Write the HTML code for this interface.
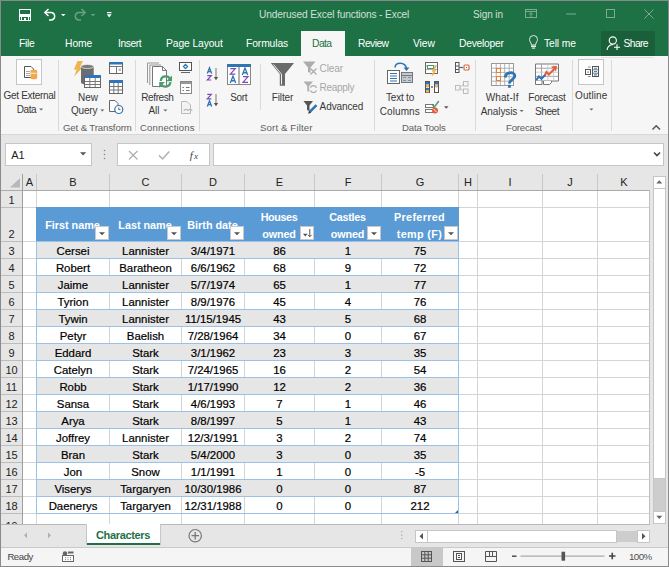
<!DOCTYPE html>
<html><head><meta charset="utf-8"><style>
html,body{margin:0;padding:0;}
body{width:669px;height:567px;position:relative;overflow:hidden;font-family:"Liberation Sans",sans-serif;}
.t{position:absolute;white-space:nowrap;}
.r{position:absolute;}
</style></head><body>
<div class="r" style="left:0px;top:0px;width:669px;height:567px;background:#8a8a8a;"></div>
<div class="r" style="left:1px;top:1px;width:667px;height:55px;background:#1e7145;"></div>
<div class="t" style="left:259px;top:8.61px;font-size:10.2px;line-height:11.72px;color:#cfe0d6;letter-spacing:-0.15px;">Underused Excel functions - Excel</div>
<div class="t" style="left:473px;top:8.79px;font-size:10px;line-height:11.49px;color:#cfe0d6;letter-spacing:-0.1px;">Sign in</div>
<div class="t" style="left:19px;top:37.51px;font-size:10.3px;line-height:11.83px;color:#ffffff;letter-spacing:-0.3px;">File</div>
<div class="t" style="left:65px;top:37.51px;font-size:10.3px;line-height:11.83px;color:#ffffff;letter-spacing:-0.05px;">Home</div>
<div class="t" style="left:118px;top:37.51px;font-size:10.3px;line-height:11.83px;color:#ffffff;letter-spacing:-0.45px;">Insert</div>
<div class="t" style="left:166px;top:37.51px;font-size:10.3px;line-height:11.83px;color:#ffffff;letter-spacing:-0.1px;">Page Layout</div>
<div class="t" style="left:246px;top:37.51px;font-size:10.3px;line-height:11.83px;color:#ffffff;letter-spacing:-0.1px;">Formulas</div>
<div class="t" style="left:358px;top:37.51px;font-size:10.3px;line-height:11.83px;color:#ffffff;letter-spacing:-0.55px;">Review</div>
<div class="t" style="left:413px;top:37.51px;font-size:10.3px;line-height:11.83px;color:#ffffff;letter-spacing:-0.1px;">View</div>
<div class="t" style="left:459px;top:37.51px;font-size:10.3px;line-height:11.83px;color:#ffffff;letter-spacing:-0.25px;">Developer</div>
<div class="t" style="left:544px;top:37.51px;font-size:10.3px;line-height:11.83px;color:#ffffff;letter-spacing:-0.1px;">Tell me</div>
<div class="r" style="left:301px;top:31px;width:44px;height:25px;background:#f6f6f6;"></div>
<div class="t" style="left:312px;top:37.51px;font-size:10.3px;line-height:11.83px;color:#1e7145;letter-spacing:-0.55px;">Data</div>
<div class="r" style="left:601px;top:31px;width:54px;height:25px;background:#195f39;"></div>
<div class="t" style="left:623.5px;top:37.51px;font-size:10.3px;line-height:11.83px;color:#ffffff;letter-spacing:-0.6px;">Share</div>
<div class="r" style="left:1px;top:56px;width:667px;height:78px;background:#f6f6f6;"></div>
<div class="r" style="left:1px;top:134px;width:667px;height:1px;background:#d8d8d8;"></div>
<div class="r" style="left:601px;top:57px;width:53px;height:1px;background:#e0e0e0;"></div>
<div class="r" style="left:58px;top:60px;width:1px;height:71px;background:#dadada;"></div>
<div class="r" style="left:135px;top:60px;width:1px;height:71px;background:#dadada;"></div>
<div class="r" style="left:199px;top:60px;width:1px;height:71px;background:#dadada;"></div>
<div class="r" style="left:374px;top:60px;width:1px;height:71px;background:#dadada;"></div>
<div class="r" style="left:475px;top:60px;width:1px;height:71px;background:#dadada;"></div>
<div class="r" style="left:572px;top:60px;width:1px;height:71px;background:#dadada;"></div>
<div class="r" style="left:611px;top:60px;width:1px;height:71px;background:#dadada;"></div>
<div class="r" style="left:260px;top:64px;width:1px;height:46px;background:#dadada;"></div>
<div class="t" style="left:63px;top:121.66px;font-size:9.6px;line-height:11.03px;color:#5e5e5e;letter-spacing:-0.12px;">Get &amp; Transform</div>
<div class="t" style="left:140px;top:121.66px;font-size:9.6px;line-height:11.03px;color:#5e5e5e;letter-spacing:0.12px;">Connections</div>
<div class="t" style="left:260px;top:121.66px;font-size:9.6px;line-height:11.03px;color:#5e5e5e;letter-spacing:0.15px;">Sort &amp; Filter</div>
<div class="t" style="left:402px;top:121.66px;font-size:9.6px;line-height:11.03px;color:#5e5e5e;letter-spacing:-0.15px;">Data Tools</div>
<div class="t" style="left:506px;top:121.66px;font-size:9.6px;line-height:11.03px;color:#5e5e5e;letter-spacing:-0.2px;">Forecast</div>
<div class="t" style="left:3.5px;top:89.79px;font-size:10px;line-height:11.49px;color:#383838;letter-spacing:-0.3px;">Get External</div>
<div class="t" style="left:16.8px;top:103.79px;font-size:10px;line-height:11.49px;color:#383838;letter-spacing:-0.45px;">Data</div>
<div class="t" style="left:78px;top:91.59px;font-size:10px;line-height:11.49px;color:#383838;">New</div>
<div class="t" style="left:71px;top:105.39px;font-size:10px;line-height:11.49px;color:#383838;letter-spacing:-0.2px;">Query</div>
<div class="t" style="left:141.3px;top:91.59px;font-size:10px;line-height:11.49px;color:#383838;letter-spacing:-0.4px;">Refresh</div>
<div class="t" style="left:148.4px;top:105.39px;font-size:10px;line-height:11.49px;color:#383838;">All</div>
<div class="t" style="left:230.3px;top:91.59px;font-size:10px;line-height:11.49px;color:#383838;letter-spacing:-0.35px;">Sort</div>
<div class="t" style="left:271.7px;top:91.59px;font-size:10px;line-height:11.49px;color:#383838;letter-spacing:-0.1px;">Filter</div>
<div class="t" style="left:319.6px;top:62.59px;font-size:10px;line-height:11.49px;color:#a6a6a6;letter-spacing:-0.1px;">Clear</div>
<div class="t" style="left:319.6px;top:82.29px;font-size:10px;line-height:11.49px;color:#a6a6a6;letter-spacing:-0.3px;">Reapply</div>
<div class="t" style="left:319.6px;top:101.49px;font-size:10px;line-height:11.49px;color:#383838;letter-spacing:-0.1px;">Advanced</div>
<div class="t" style="left:386px;top:91.59px;font-size:10px;line-height:11.49px;color:#383838;letter-spacing:-0.2px;">Text to</div>
<div class="t" style="left:379.7px;top:105.59px;font-size:10px;line-height:11.49px;color:#383838;letter-spacing:0.1px;">Columns</div>
<div class="t" style="left:485.7px;top:91.59px;font-size:10px;line-height:11.49px;color:#383838;letter-spacing:0.1px;">What-If</div>
<div class="t" style="left:480.8px;top:105.59px;font-size:10px;line-height:11.49px;color:#383838;letter-spacing:-0.1px;">Analysis</div>
<div class="t" style="left:528.3px;top:91.59px;font-size:10px;line-height:11.49px;color:#383838;letter-spacing:-0.2px;">Forecast</div>
<div class="t" style="left:535px;top:105.59px;font-size:10px;line-height:11.49px;color:#383838;letter-spacing:-0.4px;">Sheet</div>
<div class="t" style="left:575px;top:89.79px;font-size:10px;line-height:11.49px;color:#383838;letter-spacing:0.1px;">Outline</div>
<div class="r" style="left:16px;top:59px;width:26px;height:26px;background:#fdfdfd;box-shadow:inset 0 0 0 1px #c6c6c6;"></div>
<div class="r" style="left:578px;top:59px;width:26px;height:26px;background:#fdfdfd;box-shadow:inset 0 0 0 1px #c6c6c6;"></div>
<div class="r" style="left:1px;top:135px;width:667px;height:39px;background:#e6e6e6;"></div>
<div class="r" style="left:5px;top:143px;width:87px;height:23px;background:#ffffff;box-shadow:inset 0 0 0 1px #c6c6c6;"></div>
<div class="t" style="left:11.2px;top:148.57px;font-size:11px;line-height:12.64px;color:#222;">A1</div>
<div class="r" style="left:117px;top:143px;width:93px;height:23px;background:#ffffff;box-shadow:inset 0 0 0 1px #c6c6c6;"></div>
<div class="r" style="left:213px;top:143px;width:451px;height:23px;background:#ffffff;box-shadow:inset 0 0 0 1px #c6c6c6;"></div>
<div class="r" style="left:1px;top:174px;width:649px;height:17px;background:#e6e6e6;"></div>
<div class="r" style="left:1px;top:191px;width:21px;height:333px;background:#e6e6e6;"></div>
<div class="r" style="left:23px;top:191px;width:626px;height:333px;background:#ffffff;"></div>
<div class="t" style="left:23px;top:175.67px;font-size:11px;line-height:12.64px;color:#222;width:13px;text-align:center;">A</div>
<div class="t" style="left:37px;top:175.67px;font-size:11px;line-height:12.64px;color:#222;width:72px;text-align:center;">B</div>
<div class="t" style="left:110px;top:175.67px;font-size:11px;line-height:12.64px;color:#222;width:71px;text-align:center;">C</div>
<div class="t" style="left:182px;top:175.67px;font-size:11px;line-height:12.64px;color:#222;width:62px;text-align:center;">D</div>
<div class="t" style="left:245px;top:175.67px;font-size:11px;line-height:12.64px;color:#222;width:69px;text-align:center;">E</div>
<div class="t" style="left:315px;top:175.67px;font-size:11px;line-height:12.64px;color:#222;width:66px;text-align:center;">F</div>
<div class="t" style="left:382px;top:175.67px;font-size:11px;line-height:12.64px;color:#222;width:76px;text-align:center;">G</div>
<div class="t" style="left:459px;top:175.67px;font-size:11px;line-height:12.64px;color:#222;width:18px;text-align:center;">H</div>
<div class="t" style="left:478px;top:175.67px;font-size:11px;line-height:12.64px;color:#222;width:64px;text-align:center;">I</div>
<div class="t" style="left:543px;top:175.67px;font-size:11px;line-height:12.64px;color:#222;width:54px;text-align:center;">J</div>
<div class="t" style="left:598px;top:175.67px;font-size:11px;line-height:12.64px;color:#222;width:52px;text-align:center;">K</div>
<div class="r" style="left:36px;top:174px;width:1px;height:16px;background:#c8c8c8;"></div>
<div class="r" style="left:109px;top:174px;width:1px;height:16px;background:#c8c8c8;"></div>
<div class="r" style="left:181px;top:174px;width:1px;height:16px;background:#c8c8c8;"></div>
<div class="r" style="left:244px;top:174px;width:1px;height:16px;background:#c8c8c8;"></div>
<div class="r" style="left:314px;top:174px;width:1px;height:16px;background:#c8c8c8;"></div>
<div class="r" style="left:381px;top:174px;width:1px;height:16px;background:#c8c8c8;"></div>
<div class="r" style="left:458px;top:174px;width:1px;height:16px;background:#c8c8c8;"></div>
<div class="r" style="left:477px;top:174px;width:1px;height:16px;background:#c8c8c8;"></div>
<div class="r" style="left:542px;top:174px;width:1px;height:16px;background:#c8c8c8;"></div>
<div class="r" style="left:597px;top:174px;width:1px;height:16px;background:#c8c8c8;"></div>
<div class="r" style="left:1px;top:190px;width:649px;height:1px;background:#ababab;"></div>
<div class="r" style="left:22px;top:174px;width:1px;height:350px;background:#9e9e9e;"></div>
<div class="r" style="left:23px;top:207px;width:626px;height:1px;background:#d4d4d4;"></div>
<div class="r" style="left:1px;top:207px;width:21px;height:1px;background:#bdbdbd;"></div>
<div class="t" style="left:1px;top:193.97px;font-size:11px;line-height:12.64px;color:#222;width:21px;text-align:center;">1</div>
<div class="r" style="left:23px;top:241px;width:626px;height:1px;background:#d4d4d4;"></div>
<div class="r" style="left:1px;top:241px;width:21px;height:1px;background:#bdbdbd;"></div>
<div class="t" style="left:1px;top:227.97px;font-size:11px;line-height:12.64px;color:#222;width:21px;text-align:center;">2</div>
<div class="r" style="left:23px;top:258px;width:626px;height:1px;background:#d4d4d4;"></div>
<div class="r" style="left:1px;top:258px;width:21px;height:1px;background:#bdbdbd;"></div>
<div class="t" style="left:1px;top:244.97px;font-size:11px;line-height:12.64px;color:#222;width:21px;text-align:center;">3</div>
<div class="r" style="left:23px;top:275px;width:626px;height:1px;background:#d4d4d4;"></div>
<div class="r" style="left:1px;top:275px;width:21px;height:1px;background:#bdbdbd;"></div>
<div class="t" style="left:1px;top:261.97px;font-size:11px;line-height:12.64px;color:#222;width:21px;text-align:center;">4</div>
<div class="r" style="left:23px;top:292px;width:626px;height:1px;background:#d4d4d4;"></div>
<div class="r" style="left:1px;top:292px;width:21px;height:1px;background:#bdbdbd;"></div>
<div class="t" style="left:1px;top:278.97px;font-size:11px;line-height:12.64px;color:#222;width:21px;text-align:center;">5</div>
<div class="r" style="left:23px;top:309px;width:626px;height:1px;background:#d4d4d4;"></div>
<div class="r" style="left:1px;top:309px;width:21px;height:1px;background:#bdbdbd;"></div>
<div class="t" style="left:1px;top:295.97px;font-size:11px;line-height:12.64px;color:#222;width:21px;text-align:center;">6</div>
<div class="r" style="left:23px;top:326px;width:626px;height:1px;background:#d4d4d4;"></div>
<div class="r" style="left:1px;top:326px;width:21px;height:1px;background:#bdbdbd;"></div>
<div class="t" style="left:1px;top:312.97px;font-size:11px;line-height:12.64px;color:#222;width:21px;text-align:center;">7</div>
<div class="r" style="left:23px;top:343px;width:626px;height:1px;background:#d4d4d4;"></div>
<div class="r" style="left:1px;top:343px;width:21px;height:1px;background:#bdbdbd;"></div>
<div class="t" style="left:1px;top:329.97px;font-size:11px;line-height:12.64px;color:#222;width:21px;text-align:center;">8</div>
<div class="r" style="left:23px;top:360px;width:626px;height:1px;background:#d4d4d4;"></div>
<div class="r" style="left:1px;top:360px;width:21px;height:1px;background:#bdbdbd;"></div>
<div class="t" style="left:1px;top:346.97px;font-size:11px;line-height:12.64px;color:#222;width:21px;text-align:center;">9</div>
<div class="r" style="left:23px;top:377px;width:626px;height:1px;background:#d4d4d4;"></div>
<div class="r" style="left:1px;top:377px;width:21px;height:1px;background:#bdbdbd;"></div>
<div class="t" style="left:1px;top:363.97px;font-size:11px;line-height:12.64px;color:#222;width:21px;text-align:center;">10</div>
<div class="r" style="left:23px;top:394px;width:626px;height:1px;background:#d4d4d4;"></div>
<div class="r" style="left:1px;top:394px;width:21px;height:1px;background:#bdbdbd;"></div>
<div class="t" style="left:1px;top:380.97px;font-size:11px;line-height:12.64px;color:#222;width:21px;text-align:center;">11</div>
<div class="r" style="left:23px;top:411px;width:626px;height:1px;background:#d4d4d4;"></div>
<div class="r" style="left:1px;top:411px;width:21px;height:1px;background:#bdbdbd;"></div>
<div class="t" style="left:1px;top:397.97px;font-size:11px;line-height:12.64px;color:#222;width:21px;text-align:center;">12</div>
<div class="r" style="left:23px;top:428px;width:626px;height:1px;background:#d4d4d4;"></div>
<div class="r" style="left:1px;top:428px;width:21px;height:1px;background:#bdbdbd;"></div>
<div class="t" style="left:1px;top:414.97px;font-size:11px;line-height:12.64px;color:#222;width:21px;text-align:center;">13</div>
<div class="r" style="left:23px;top:445px;width:626px;height:1px;background:#d4d4d4;"></div>
<div class="r" style="left:1px;top:445px;width:21px;height:1px;background:#bdbdbd;"></div>
<div class="t" style="left:1px;top:431.97px;font-size:11px;line-height:12.64px;color:#222;width:21px;text-align:center;">14</div>
<div class="r" style="left:23px;top:462px;width:626px;height:1px;background:#d4d4d4;"></div>
<div class="r" style="left:1px;top:462px;width:21px;height:1px;background:#bdbdbd;"></div>
<div class="t" style="left:1px;top:448.97px;font-size:11px;line-height:12.64px;color:#222;width:21px;text-align:center;">15</div>
<div class="r" style="left:23px;top:479px;width:626px;height:1px;background:#d4d4d4;"></div>
<div class="r" style="left:1px;top:479px;width:21px;height:1px;background:#bdbdbd;"></div>
<div class="t" style="left:1px;top:465.97px;font-size:11px;line-height:12.64px;color:#222;width:21px;text-align:center;">16</div>
<div class="r" style="left:23px;top:496px;width:626px;height:1px;background:#d4d4d4;"></div>
<div class="r" style="left:1px;top:496px;width:21px;height:1px;background:#bdbdbd;"></div>
<div class="t" style="left:1px;top:482.97px;font-size:11px;line-height:12.64px;color:#222;width:21px;text-align:center;">17</div>
<div class="r" style="left:23px;top:513px;width:626px;height:1px;background:#d4d4d4;"></div>
<div class="r" style="left:1px;top:513px;width:21px;height:1px;background:#bdbdbd;"></div>
<div class="t" style="left:1px;top:499.97px;font-size:11px;line-height:12.64px;color:#222;width:21px;text-align:center;">18</div>
<div class="t" style="left:1px;top:519.97px;font-size:11px;line-height:12.64px;color:#222;width:21px;text-align:center;">19</div>
<div class="r" style="left:36px;top:191px;width:1px;height:333px;background:#d4d4d4;"></div>
<div class="r" style="left:109px;top:191px;width:1px;height:333px;background:#d4d4d4;"></div>
<div class="r" style="left:181px;top:191px;width:1px;height:333px;background:#d4d4d4;"></div>
<div class="r" style="left:244px;top:191px;width:1px;height:333px;background:#d4d4d4;"></div>
<div class="r" style="left:314px;top:191px;width:1px;height:333px;background:#d4d4d4;"></div>
<div class="r" style="left:381px;top:191px;width:1px;height:333px;background:#d4d4d4;"></div>
<div class="r" style="left:458px;top:191px;width:1px;height:333px;background:#d4d4d4;"></div>
<div class="r" style="left:477px;top:191px;width:1px;height:333px;background:#d4d4d4;"></div>
<div class="r" style="left:542px;top:191px;width:1px;height:333px;background:#d4d4d4;"></div>
<div class="r" style="left:597px;top:191px;width:1px;height:333px;background:#d4d4d4;"></div>
<div class="r" style="left:649px;top:190px;width:1px;height:334px;background:#c0c0c0;"></div>
<div class="r" style="left:36px;top:207px;width:423px;height:34px;background:#5b9bd5;"></div>
<div class="t" style="left:36px;top:219.25px;font-size:10.8px;line-height:12.41px;color:#ffffff;font-weight:bold;width:73px;text-align:center;">First name</div>
<div class="t" style="left:109px;top:219.25px;font-size:10.8px;line-height:12.41px;color:#ffffff;font-weight:bold;width:72px;text-align:center;">Last name</div>
<div class="t" style="left:181px;top:219.25px;font-size:10.8px;line-height:12.41px;color:#ffffff;font-weight:bold;width:63px;text-align:center;">Birth date</div>
<div class="t" style="left:244px;top:210.95px;font-size:10.8px;line-height:12.41px;color:#ffffff;font-weight:bold;width:70px;text-align:center;letter-spacing:-0.4px;">Houses</div>
<div class="t" style="left:244px;top:228.05px;font-size:10.8px;line-height:12.41px;color:#ffffff;font-weight:bold;width:70px;text-align:center;letter-spacing:-0.1px;">owned</div>
<div class="t" style="left:314px;top:210.95px;font-size:10.8px;line-height:12.41px;color:#ffffff;font-weight:bold;width:67px;text-align:center;letter-spacing:-0.3px;">Castles</div>
<div class="t" style="left:314px;top:228.05px;font-size:10.8px;line-height:12.41px;color:#ffffff;font-weight:bold;width:67px;text-align:center;letter-spacing:-0.1px;">owned</div>
<div class="t" style="left:381px;top:210.95px;font-size:10.8px;line-height:12.41px;color:#ffffff;font-weight:bold;width:77px;text-align:center;letter-spacing:0.32px;">Preferred</div>
<div class="t" style="left:381px;top:228.05px;font-size:10.8px;line-height:12.41px;color:#ffffff;font-weight:bold;width:77px;text-align:center;letter-spacing:0.34px;">temp (F)</div>
<div class="r" style="left:37px;top:242px;width:421px;height:16px;background:#e6e6e6;"></div>
<div class="r" style="left:36px;top:258px;width:423px;height:1px;background:#9bc2e6;"></div>
<div class="t" style="left:37px;top:245.00px;font-size:11.4px;line-height:13.10px;color:#000;width:72px;text-align:center;-webkit-text-stroke:0.2px #000;">Cersei</div>
<div class="t" style="left:110px;top:245.00px;font-size:11.4px;line-height:13.10px;color:#000;width:71px;text-align:center;-webkit-text-stroke:0.2px #000;">Lannister</div>
<div class="t" style="left:182px;top:245.00px;font-size:11.4px;line-height:13.10px;color:#000;width:62px;text-align:center;-webkit-text-stroke:0.2px #000;">3/4/1971</div>
<div class="t" style="left:245px;top:245.00px;font-size:11.4px;line-height:13.10px;color:#000;width:69px;text-align:center;-webkit-text-stroke:0.2px #000;">86</div>
<div class="t" style="left:315px;top:245.00px;font-size:11.4px;line-height:13.10px;color:#000;width:66px;text-align:center;-webkit-text-stroke:0.2px #000;">1</div>
<div class="t" style="left:382px;top:245.00px;font-size:11.4px;line-height:13.10px;color:#000;width:76px;text-align:center;-webkit-text-stroke:0.2px #000;">75</div>
<div class="r" style="left:36px;top:275px;width:423px;height:1px;background:#9bc2e6;"></div>
<div class="t" style="left:37px;top:262.00px;font-size:11.4px;line-height:13.10px;color:#000;width:72px;text-align:center;-webkit-text-stroke:0.2px #000;">Robert</div>
<div class="t" style="left:110px;top:262.00px;font-size:11.4px;line-height:13.10px;color:#000;width:71px;text-align:center;-webkit-text-stroke:0.2px #000;">Baratheon</div>
<div class="t" style="left:182px;top:262.00px;font-size:11.4px;line-height:13.10px;color:#000;width:62px;text-align:center;-webkit-text-stroke:0.2px #000;">6/6/1962</div>
<div class="t" style="left:245px;top:262.00px;font-size:11.4px;line-height:13.10px;color:#000;width:69px;text-align:center;-webkit-text-stroke:0.2px #000;">68</div>
<div class="t" style="left:315px;top:262.00px;font-size:11.4px;line-height:13.10px;color:#000;width:66px;text-align:center;-webkit-text-stroke:0.2px #000;">9</div>
<div class="t" style="left:382px;top:262.00px;font-size:11.4px;line-height:13.10px;color:#000;width:76px;text-align:center;-webkit-text-stroke:0.2px #000;">72</div>
<div class="r" style="left:37px;top:276px;width:421px;height:16px;background:#e6e6e6;"></div>
<div class="r" style="left:36px;top:292px;width:423px;height:1px;background:#9bc2e6;"></div>
<div class="t" style="left:37px;top:279.00px;font-size:11.4px;line-height:13.10px;color:#000;width:72px;text-align:center;-webkit-text-stroke:0.2px #000;">Jaime</div>
<div class="t" style="left:110px;top:279.00px;font-size:11.4px;line-height:13.10px;color:#000;width:71px;text-align:center;-webkit-text-stroke:0.2px #000;">Lannister</div>
<div class="t" style="left:182px;top:279.00px;font-size:11.4px;line-height:13.10px;color:#000;width:62px;text-align:center;-webkit-text-stroke:0.2px #000;">5/7/1974</div>
<div class="t" style="left:245px;top:279.00px;font-size:11.4px;line-height:13.10px;color:#000;width:69px;text-align:center;-webkit-text-stroke:0.2px #000;">65</div>
<div class="t" style="left:315px;top:279.00px;font-size:11.4px;line-height:13.10px;color:#000;width:66px;text-align:center;-webkit-text-stroke:0.2px #000;">1</div>
<div class="t" style="left:382px;top:279.00px;font-size:11.4px;line-height:13.10px;color:#000;width:76px;text-align:center;-webkit-text-stroke:0.2px #000;">77</div>
<div class="r" style="left:36px;top:309px;width:423px;height:1px;background:#9bc2e6;"></div>
<div class="t" style="left:37px;top:296.00px;font-size:11.4px;line-height:13.10px;color:#000;width:72px;text-align:center;-webkit-text-stroke:0.2px #000;">Tyrion</div>
<div class="t" style="left:110px;top:296.00px;font-size:11.4px;line-height:13.10px;color:#000;width:71px;text-align:center;-webkit-text-stroke:0.2px #000;">Lannister</div>
<div class="t" style="left:182px;top:296.00px;font-size:11.4px;line-height:13.10px;color:#000;width:62px;text-align:center;-webkit-text-stroke:0.2px #000;">8/9/1976</div>
<div class="t" style="left:245px;top:296.00px;font-size:11.4px;line-height:13.10px;color:#000;width:69px;text-align:center;-webkit-text-stroke:0.2px #000;">45</div>
<div class="t" style="left:315px;top:296.00px;font-size:11.4px;line-height:13.10px;color:#000;width:66px;text-align:center;-webkit-text-stroke:0.2px #000;">4</div>
<div class="t" style="left:382px;top:296.00px;font-size:11.4px;line-height:13.10px;color:#000;width:76px;text-align:center;-webkit-text-stroke:0.2px #000;">76</div>
<div class="r" style="left:37px;top:310px;width:421px;height:16px;background:#e6e6e6;"></div>
<div class="r" style="left:36px;top:326px;width:423px;height:1px;background:#9bc2e6;"></div>
<div class="t" style="left:37px;top:313.00px;font-size:11.4px;line-height:13.10px;color:#000;width:72px;text-align:center;-webkit-text-stroke:0.2px #000;">Tywin</div>
<div class="t" style="left:110px;top:313.00px;font-size:11.4px;line-height:13.10px;color:#000;width:71px;text-align:center;-webkit-text-stroke:0.2px #000;">Lannister</div>
<div class="t" style="left:182px;top:313.00px;font-size:11.4px;line-height:13.10px;color:#000;width:62px;text-align:center;-webkit-text-stroke:0.2px #000;">11/15/1945</div>
<div class="t" style="left:245px;top:313.00px;font-size:11.4px;line-height:13.10px;color:#000;width:69px;text-align:center;-webkit-text-stroke:0.2px #000;">43</div>
<div class="t" style="left:315px;top:313.00px;font-size:11.4px;line-height:13.10px;color:#000;width:66px;text-align:center;-webkit-text-stroke:0.2px #000;">5</div>
<div class="t" style="left:382px;top:313.00px;font-size:11.4px;line-height:13.10px;color:#000;width:76px;text-align:center;-webkit-text-stroke:0.2px #000;">68</div>
<div class="r" style="left:36px;top:343px;width:423px;height:1px;background:#9bc2e6;"></div>
<div class="t" style="left:37px;top:330.00px;font-size:11.4px;line-height:13.10px;color:#000;width:72px;text-align:center;-webkit-text-stroke:0.2px #000;">Petyr</div>
<div class="t" style="left:110px;top:330.00px;font-size:11.4px;line-height:13.10px;color:#000;width:71px;text-align:center;-webkit-text-stroke:0.2px #000;">Baelish</div>
<div class="t" style="left:182px;top:330.00px;font-size:11.4px;line-height:13.10px;color:#000;width:62px;text-align:center;-webkit-text-stroke:0.2px #000;">7/28/1964</div>
<div class="t" style="left:245px;top:330.00px;font-size:11.4px;line-height:13.10px;color:#000;width:69px;text-align:center;-webkit-text-stroke:0.2px #000;">34</div>
<div class="t" style="left:315px;top:330.00px;font-size:11.4px;line-height:13.10px;color:#000;width:66px;text-align:center;-webkit-text-stroke:0.2px #000;">0</div>
<div class="t" style="left:382px;top:330.00px;font-size:11.4px;line-height:13.10px;color:#000;width:76px;text-align:center;-webkit-text-stroke:0.2px #000;">67</div>
<div class="r" style="left:37px;top:344px;width:421px;height:16px;background:#e6e6e6;"></div>
<div class="r" style="left:36px;top:360px;width:423px;height:1px;background:#9bc2e6;"></div>
<div class="t" style="left:37px;top:347.00px;font-size:11.4px;line-height:13.10px;color:#000;width:72px;text-align:center;-webkit-text-stroke:0.2px #000;">Eddard</div>
<div class="t" style="left:110px;top:347.00px;font-size:11.4px;line-height:13.10px;color:#000;width:71px;text-align:center;-webkit-text-stroke:0.2px #000;">Stark</div>
<div class="t" style="left:182px;top:347.00px;font-size:11.4px;line-height:13.10px;color:#000;width:62px;text-align:center;-webkit-text-stroke:0.2px #000;">3/1/1962</div>
<div class="t" style="left:245px;top:347.00px;font-size:11.4px;line-height:13.10px;color:#000;width:69px;text-align:center;-webkit-text-stroke:0.2px #000;">23</div>
<div class="t" style="left:315px;top:347.00px;font-size:11.4px;line-height:13.10px;color:#000;width:66px;text-align:center;-webkit-text-stroke:0.2px #000;">3</div>
<div class="t" style="left:382px;top:347.00px;font-size:11.4px;line-height:13.10px;color:#000;width:76px;text-align:center;-webkit-text-stroke:0.2px #000;">35</div>
<div class="r" style="left:36px;top:377px;width:423px;height:1px;background:#9bc2e6;"></div>
<div class="t" style="left:37px;top:364.00px;font-size:11.4px;line-height:13.10px;color:#000;width:72px;text-align:center;-webkit-text-stroke:0.2px #000;">Catelyn</div>
<div class="t" style="left:110px;top:364.00px;font-size:11.4px;line-height:13.10px;color:#000;width:71px;text-align:center;-webkit-text-stroke:0.2px #000;">Stark</div>
<div class="t" style="left:182px;top:364.00px;font-size:11.4px;line-height:13.10px;color:#000;width:62px;text-align:center;-webkit-text-stroke:0.2px #000;">7/24/1965</div>
<div class="t" style="left:245px;top:364.00px;font-size:11.4px;line-height:13.10px;color:#000;width:69px;text-align:center;-webkit-text-stroke:0.2px #000;">16</div>
<div class="t" style="left:315px;top:364.00px;font-size:11.4px;line-height:13.10px;color:#000;width:66px;text-align:center;-webkit-text-stroke:0.2px #000;">2</div>
<div class="t" style="left:382px;top:364.00px;font-size:11.4px;line-height:13.10px;color:#000;width:76px;text-align:center;-webkit-text-stroke:0.2px #000;">54</div>
<div class="r" style="left:37px;top:378px;width:421px;height:16px;background:#e6e6e6;"></div>
<div class="r" style="left:36px;top:394px;width:423px;height:1px;background:#9bc2e6;"></div>
<div class="t" style="left:37px;top:381.00px;font-size:11.4px;line-height:13.10px;color:#000;width:72px;text-align:center;-webkit-text-stroke:0.2px #000;">Robb</div>
<div class="t" style="left:110px;top:381.00px;font-size:11.4px;line-height:13.10px;color:#000;width:71px;text-align:center;-webkit-text-stroke:0.2px #000;">Stark</div>
<div class="t" style="left:182px;top:381.00px;font-size:11.4px;line-height:13.10px;color:#000;width:62px;text-align:center;-webkit-text-stroke:0.2px #000;">1/17/1990</div>
<div class="t" style="left:245px;top:381.00px;font-size:11.4px;line-height:13.10px;color:#000;width:69px;text-align:center;-webkit-text-stroke:0.2px #000;">12</div>
<div class="t" style="left:315px;top:381.00px;font-size:11.4px;line-height:13.10px;color:#000;width:66px;text-align:center;-webkit-text-stroke:0.2px #000;">2</div>
<div class="t" style="left:382px;top:381.00px;font-size:11.4px;line-height:13.10px;color:#000;width:76px;text-align:center;-webkit-text-stroke:0.2px #000;">36</div>
<div class="r" style="left:36px;top:411px;width:423px;height:1px;background:#9bc2e6;"></div>
<div class="t" style="left:37px;top:398.00px;font-size:11.4px;line-height:13.10px;color:#000;width:72px;text-align:center;-webkit-text-stroke:0.2px #000;">Sansa</div>
<div class="t" style="left:110px;top:398.00px;font-size:11.4px;line-height:13.10px;color:#000;width:71px;text-align:center;-webkit-text-stroke:0.2px #000;">Stark</div>
<div class="t" style="left:182px;top:398.00px;font-size:11.4px;line-height:13.10px;color:#000;width:62px;text-align:center;-webkit-text-stroke:0.2px #000;">4/6/1993</div>
<div class="t" style="left:245px;top:398.00px;font-size:11.4px;line-height:13.10px;color:#000;width:69px;text-align:center;-webkit-text-stroke:0.2px #000;">7</div>
<div class="t" style="left:315px;top:398.00px;font-size:11.4px;line-height:13.10px;color:#000;width:66px;text-align:center;-webkit-text-stroke:0.2px #000;">1</div>
<div class="t" style="left:382px;top:398.00px;font-size:11.4px;line-height:13.10px;color:#000;width:76px;text-align:center;-webkit-text-stroke:0.2px #000;">46</div>
<div class="r" style="left:37px;top:412px;width:421px;height:16px;background:#e6e6e6;"></div>
<div class="r" style="left:36px;top:428px;width:423px;height:1px;background:#9bc2e6;"></div>
<div class="t" style="left:37px;top:415.00px;font-size:11.4px;line-height:13.10px;color:#000;width:72px;text-align:center;-webkit-text-stroke:0.2px #000;">Arya</div>
<div class="t" style="left:110px;top:415.00px;font-size:11.4px;line-height:13.10px;color:#000;width:71px;text-align:center;-webkit-text-stroke:0.2px #000;">Stark</div>
<div class="t" style="left:182px;top:415.00px;font-size:11.4px;line-height:13.10px;color:#000;width:62px;text-align:center;-webkit-text-stroke:0.2px #000;">8/8/1997</div>
<div class="t" style="left:245px;top:415.00px;font-size:11.4px;line-height:13.10px;color:#000;width:69px;text-align:center;-webkit-text-stroke:0.2px #000;">5</div>
<div class="t" style="left:315px;top:415.00px;font-size:11.4px;line-height:13.10px;color:#000;width:66px;text-align:center;-webkit-text-stroke:0.2px #000;">1</div>
<div class="t" style="left:382px;top:415.00px;font-size:11.4px;line-height:13.10px;color:#000;width:76px;text-align:center;-webkit-text-stroke:0.2px #000;">43</div>
<div class="r" style="left:36px;top:445px;width:423px;height:1px;background:#9bc2e6;"></div>
<div class="t" style="left:37px;top:432.00px;font-size:11.4px;line-height:13.10px;color:#000;width:72px;text-align:center;-webkit-text-stroke:0.2px #000;">Joffrey</div>
<div class="t" style="left:110px;top:432.00px;font-size:11.4px;line-height:13.10px;color:#000;width:71px;text-align:center;-webkit-text-stroke:0.2px #000;">Lannister</div>
<div class="t" style="left:182px;top:432.00px;font-size:11.4px;line-height:13.10px;color:#000;width:62px;text-align:center;-webkit-text-stroke:0.2px #000;">12/3/1991</div>
<div class="t" style="left:245px;top:432.00px;font-size:11.4px;line-height:13.10px;color:#000;width:69px;text-align:center;-webkit-text-stroke:0.2px #000;">3</div>
<div class="t" style="left:315px;top:432.00px;font-size:11.4px;line-height:13.10px;color:#000;width:66px;text-align:center;-webkit-text-stroke:0.2px #000;">2</div>
<div class="t" style="left:382px;top:432.00px;font-size:11.4px;line-height:13.10px;color:#000;width:76px;text-align:center;-webkit-text-stroke:0.2px #000;">74</div>
<div class="r" style="left:37px;top:446px;width:421px;height:16px;background:#e6e6e6;"></div>
<div class="r" style="left:36px;top:462px;width:423px;height:1px;background:#9bc2e6;"></div>
<div class="t" style="left:37px;top:449.00px;font-size:11.4px;line-height:13.10px;color:#000;width:72px;text-align:center;-webkit-text-stroke:0.2px #000;">Bran</div>
<div class="t" style="left:110px;top:449.00px;font-size:11.4px;line-height:13.10px;color:#000;width:71px;text-align:center;-webkit-text-stroke:0.2px #000;">Stark</div>
<div class="t" style="left:182px;top:449.00px;font-size:11.4px;line-height:13.10px;color:#000;width:62px;text-align:center;-webkit-text-stroke:0.2px #000;">5/4/2000</div>
<div class="t" style="left:245px;top:449.00px;font-size:11.4px;line-height:13.10px;color:#000;width:69px;text-align:center;-webkit-text-stroke:0.2px #000;">3</div>
<div class="t" style="left:315px;top:449.00px;font-size:11.4px;line-height:13.10px;color:#000;width:66px;text-align:center;-webkit-text-stroke:0.2px #000;">0</div>
<div class="t" style="left:382px;top:449.00px;font-size:11.4px;line-height:13.10px;color:#000;width:76px;text-align:center;-webkit-text-stroke:0.2px #000;">35</div>
<div class="r" style="left:36px;top:479px;width:423px;height:1px;background:#9bc2e6;"></div>
<div class="t" style="left:37px;top:466.00px;font-size:11.4px;line-height:13.10px;color:#000;width:72px;text-align:center;-webkit-text-stroke:0.2px #000;">Jon</div>
<div class="t" style="left:110px;top:466.00px;font-size:11.4px;line-height:13.10px;color:#000;width:71px;text-align:center;-webkit-text-stroke:0.2px #000;">Snow</div>
<div class="t" style="left:182px;top:466.00px;font-size:11.4px;line-height:13.10px;color:#000;width:62px;text-align:center;-webkit-text-stroke:0.2px #000;">1/1/1991</div>
<div class="t" style="left:245px;top:466.00px;font-size:11.4px;line-height:13.10px;color:#000;width:69px;text-align:center;-webkit-text-stroke:0.2px #000;">1</div>
<div class="t" style="left:315px;top:466.00px;font-size:11.4px;line-height:13.10px;color:#000;width:66px;text-align:center;-webkit-text-stroke:0.2px #000;">0</div>
<div class="t" style="left:382px;top:466.00px;font-size:11.4px;line-height:13.10px;color:#000;width:76px;text-align:center;-webkit-text-stroke:0.2px #000;">-5</div>
<div class="r" style="left:37px;top:480px;width:421px;height:16px;background:#e6e6e6;"></div>
<div class="r" style="left:36px;top:496px;width:423px;height:1px;background:#9bc2e6;"></div>
<div class="t" style="left:37px;top:483.00px;font-size:11.4px;line-height:13.10px;color:#000;width:72px;text-align:center;-webkit-text-stroke:0.2px #000;">Viserys</div>
<div class="t" style="left:110px;top:483.00px;font-size:11.4px;line-height:13.10px;color:#000;width:71px;text-align:center;-webkit-text-stroke:0.2px #000;">Targaryen</div>
<div class="t" style="left:182px;top:483.00px;font-size:11.4px;line-height:13.10px;color:#000;width:62px;text-align:center;-webkit-text-stroke:0.2px #000;">10/30/1986</div>
<div class="t" style="left:245px;top:483.00px;font-size:11.4px;line-height:13.10px;color:#000;width:69px;text-align:center;-webkit-text-stroke:0.2px #000;">0</div>
<div class="t" style="left:315px;top:483.00px;font-size:11.4px;line-height:13.10px;color:#000;width:66px;text-align:center;-webkit-text-stroke:0.2px #000;">0</div>
<div class="t" style="left:382px;top:483.00px;font-size:11.4px;line-height:13.10px;color:#000;width:76px;text-align:center;-webkit-text-stroke:0.2px #000;">87</div>
<div class="r" style="left:36px;top:513px;width:423px;height:1px;background:#9bc2e6;"></div>
<div class="t" style="left:37px;top:500.00px;font-size:11.4px;line-height:13.10px;color:#000;width:72px;text-align:center;-webkit-text-stroke:0.2px #000;">Daenerys</div>
<div class="t" style="left:110px;top:500.00px;font-size:11.4px;line-height:13.10px;color:#000;width:71px;text-align:center;-webkit-text-stroke:0.2px #000;">Targaryen</div>
<div class="t" style="left:182px;top:500.00px;font-size:11.4px;line-height:13.10px;color:#000;width:62px;text-align:center;-webkit-text-stroke:0.2px #000;">12/31/1988</div>
<div class="t" style="left:245px;top:500.00px;font-size:11.4px;line-height:13.10px;color:#000;width:69px;text-align:center;-webkit-text-stroke:0.2px #000;">0</div>
<div class="t" style="left:315px;top:500.00px;font-size:11.4px;line-height:13.10px;color:#000;width:66px;text-align:center;-webkit-text-stroke:0.2px #000;">0</div>
<div class="t" style="left:382px;top:500.00px;font-size:11.4px;line-height:13.10px;color:#000;width:76px;text-align:center;-webkit-text-stroke:0.2px #000;">212</div>
<div class="r" style="left:36px;top:241px;width:423px;height:1px;background:#9bc2e6;"></div>
<div class="r" style="left:36px;top:241px;width:1px;height:273px;background:#9bc2e6;"></div>
<div class="r" style="left:458px;top:241px;width:1px;height:273px;background:#9bc2e6;"></div>
<div class="r" style="left:650px;top:174px;width:18px;height:350px;background:#e6e6e6;"></div>
<div class="r" style="left:653px;top:176px;width:13px;height:348px;background:#ffffff;box-shadow:inset 0 0 0 1px #c6c6c6;"></div>
<div class="r" style="left:1px;top:524px;width:667px;height:23px;background:#e6e6e6;"></div>
<div class="r" style="left:1px;top:524px;width:649px;height:1px;background:#b9b9b9;"></div>
<div class="r" style="left:86px;top:524px;width:75px;height:21px;background:#ffffff;box-shadow:inset 1px 0 0 #c6c6c6, inset -1px 0 0 #c6c6c6;"></div>
<div class="r" style="left:87px;top:543px;width:73px;height:2px;background:#1e7145;"></div>
<div class="t" style="left:96px;top:529.07px;font-size:11px;line-height:12.64px;color:#1e7145;font-weight:bold;letter-spacing:-0.35px;">Characters</div>
<div class="r" style="left:1px;top:547px;width:667px;height:19px;background:#f5f5f5;"></div>
<div class="r" style="left:1px;top:547px;width:667px;height:1px;background:#c9c9c9;"></div>
<div class="t" style="left:7.4px;top:551.16px;font-size:9.6px;line-height:11.03px;color:#444;letter-spacing:-0.45px;">Ready</div>
<div class="t" style="left:629px;top:550.87px;font-size:9.8px;line-height:11.26px;color:#505050;letter-spacing:-0.6px;">100%</div>
<svg class="r" style="left:0;top:0" width="669" height="567" viewBox="0 0 669 567"><rect x="19.5" y="9.5" width="11" height="11" fill="none" stroke="#fff" stroke-width="1"/><rect x="20" y="14" width="10" height="3" fill="#fff"/><rect x="21" y="17" width="1" height="3" fill="#fff"/><rect x="28" y="17" width="1" height="3" fill="#fff"/><rect x="24" y="18" width="2" height="2" fill="#fff"/><path d="M45 12.5 H51.5 A3.8 3.8 0 0 1 51.5 20 H49" fill="none" stroke="#fff" stroke-width="1.4"/><path d="M48.5 9 L44.8 12.5 L48.5 16" fill="none" stroke="#fff" stroke-width="1.4"/><path d="M61 14 H65.5 L63.25 16.2 Z" fill="#fff"/><path d="M85 12.5 H78.5 A3.8 3.8 0 0 0 78.5 20 H81" fill="none" stroke="#6aa383" stroke-width="1.4"/><path d="M81.5 9 L85.2 12.5 L81.5 16" fill="none" stroke="#6aa383" stroke-width="1.4"/><path d="M90.8 14 H95.2 L93 16.2 Z" fill="#6aa383"/><rect x="107" y="12" width="4.5" height="1.2" fill="#fff"/><path d="M106.8 14.3 H111.6 L109.2 17.6 Z" fill="#fff"/><rect x="525.5" y="9.5" width="11" height="8" fill="none" stroke="#7dac90" stroke-width="1"/><path d="M526 11.5 H536" stroke="#7dac90"/><path d="M531 17 V13 M529 14.5 L531 12.5 L533 14.5" fill="none" stroke="#7dac90"/><rect x="566" y="13.5" width="10" height="1" fill="#7dac90"/><rect x="606.5" y="9.5" width="8" height="8" fill="none" stroke="#7dac90"/><path d="M644.5 9.5 L653.5 18.5 M653.5 9.5 L644.5 18.5" stroke="#7dac90" stroke-width="1"/><path d="M531.5 45 C531 42 529.5 41.5 529.5 39.5 A4 4 0 0 1 537.5 39.5 C537.5 41.5 536 42 535.5 45 Z" fill="none" stroke="#dfeae3" stroke-width="1"/><rect x="531" y="45.5" width="5" height="1.5" fill="#dfeae3"/><rect x="531.8" y="47.5" width="3.4" height="1.2" fill="#dfeae3"/><circle cx="612.8" cy="40.5" r="3.6" fill="none" stroke="#fff" stroke-width="1.1"/><path d="M607 50 C607.5 46.5 610 44.8 613 44.5" fill="none" stroke="#fff" stroke-width="1.1"/><path d="M614 47.3 H620 M617 44.2 V50" stroke="#fff" stroke-width="1.1"/><path d="M24.5 66.5 H31 L33.5 69 V77.5 H24.5 Z" fill="#fff" stroke="#555" stroke-width="1"/><path d="M26 71.5 H30 M26 73.5 H30 M26 75.5 H30" stroke="#aaa"/><path d="M30.5 71 A3.3 1.3 0 0 1 37.2 71 V78 A3.3 1.3 0 0 1 30.5 78 Z" fill="#f2a94d"/><path d="M31 73.3 H36.5" stroke="#fff" stroke-width="0.8"/><path d="M77.5 61 H83 L80 67 L82 68 L74.2 76.6 L76.6 69.7 L73.9 69.4 Z" fill="#f0b350"/><path d="M81 66.5 V82.5 A6.3 2 0 0 0 93.7 82.5 V66.5 Z" fill="#6d6d6d"/><ellipse cx="87.35" cy="66.5" rx="6.35" ry="2" fill="#7a7a7a" stroke="#f3f3f3" stroke-width="0.7"/><rect x="84.5" y="75.5" width="16" height="12" fill="#fff" stroke="#666"/><rect x="85" y="75" width="16" height="3" fill="#2f75bb"/><path d="M85 81.5 H100 M85 84.5 H100 M89.8 78 V87 M95.2 78 V87" stroke="#777" stroke-width="1"/><rect x="109.5" y="62.5" width="13" height="11" fill="#fff" stroke="#666"/><rect x="110" y="62" width="13" height="2.5" fill="#2f75bb"/><path d="M110 66.5 H122 M116.5 66.5 V73" stroke="#777"/><rect x="118.5" y="68.5" width="2.5" height="2.5" fill="#bbb"/><rect x="109.5" y="80.5" width="13" height="13" fill="#fff" stroke="#666"/><rect x="110" y="80" width="13" height="3" fill="#2f75bb"/><path d="M110 86.5 H122 M110 90 H122 M113.8 83 V93 M118.2 83 V93" stroke="#777"/><path d="M109.5 100.5 H115 L118 103.5 V111.5 H109.5 Z" fill="#fff" stroke="#666"/><circle cx="118.8" cy="109.5" r="4" fill="#fff" stroke="#2e75b6" stroke-width="1.2"/><path d="M118.8 107.5 V109.7 H120.5" stroke="#555" stroke-width="0.9" fill="none"/><path d="M147.5 63 V83 M147.5 63 H159" stroke="#999" fill="none"/><path d="M149.8 65 V85 M149.8 65 H161" stroke="#999" fill="none"/><path d="M152.5 66.5 H162.5 L166.5 70.5 V86.5 H152.5 Z" fill="#fff" stroke="#777"/><path d="M162.5 66.5 V70.5 H166.5" fill="none" stroke="#777"/><path d="M160.8 81 A4.9 4.9 0 0 1 170.3 79.6" fill="none" stroke="#4f9b70" stroke-width="2.3"/><path d="M170.4 82.2 A4.9 4.9 0 0 1 161 83.6" fill="none" stroke="#4f9b70" stroke-width="2.3"/><path d="M166.2 81.3 H172 V75.5 Z" fill="#4f9b70"/><path d="M165 82 H159.2 V87.8 Z" fill="#4f9b70"/><rect x="179.5" y="62.5" width="12" height="8" fill="#fff" stroke="#555"/><path d="M181 72.5 H190" stroke="#666"/><path d="M185.5 64.3 L187.6 66.5 L185.5 68.7 L183.4 66.5 Z" fill="none" stroke="#2e75b6" stroke-width="1.2"/><rect x="180.5" y="81.5" width="11" height="12" fill="#fff" stroke="#888"/><rect x="181" y="82" width="10" height="2" fill="#999"/><path d="M182.5 87.5 H184 M186 87.5 H189.5 M182.5 90.5 H184 M186 90.5 H189.5" stroke="#777"/><path d="M181.5 101.5 H187 L190.5 105 V113.5 H181.5 Z" fill="#f3f3f3" stroke="#bbb"/><path d="M184 111 a2 1.6 0 0 1 4 0 a2 1.6 0 0 1 4 0" fill="none" stroke="#bbb" stroke-width="1.2"/><path d="M207.3 73.5 L209.5 67.9 L211.7 73.5 M208.1 71.708 H210.9" fill="none" stroke="#2e75b6" stroke-width="1.3"/><path d="M207.3 75.6 H211.3 L207.3 80.0 H211.3" fill="none" stroke="#7e4ab3" stroke-width="1.2"/><path d="M216 68 V78" stroke="#a6a6a6" stroke-width="1.6"/><path d="M213.8 77 L218.2 77 L216 80.3 Z" fill="#555"/><path d="M207.3 94.39999999999999 H211.3 L207.3 98.80000000000001 H211.3" fill="none" stroke="#7e4ab3" stroke-width="1.2"/><path d="M207.3 106.5 L209.5 100.9 L211.7 106.5 M208.1 104.708 H210.9" fill="none" stroke="#2e75b6" stroke-width="1.3"/><path d="M216 94 V104" stroke="#a6a6a6" stroke-width="1.6"/><path d="M213.8 103 L218.2 103 L216 106.3 Z" fill="#555"/><rect x="227.5" y="64.5" width="23" height="20" fill="#fff" stroke="#888"/><rect x="227" y="64" width="24" height="3" fill="#2e75b6"/><path d="M239 67 V84" stroke="#aaa" stroke-width="1.8"/><path d="M230.3 68.6 H235.3 L230.3 74.2 H235.3" fill="none" stroke="#7e4ab3" stroke-width="1.2"/><path d="M230.3 83 L233.0 76 L235.7 83 M231.32 80.76 H234.68" fill="none" stroke="#2e75b6" stroke-width="1.3"/><path d="M242.3 75 L245.0 68 L247.7 75 M243.32 72.76 H246.68" fill="none" stroke="#2e75b6" stroke-width="1.3"/><path d="M243 76.6 H248 L243 82.4 H248" fill="none" stroke="#7e4ab3" stroke-width="1.2"/><path d="M270.8 63 H294 L285 73.9 V85.7 H279.8 V73.9 Z" fill="#6a6a6a"/><path d="M273.5 64.5 L281.5 74.3 V84.5" fill="none" stroke="#fff" stroke-width="0.9"/><path d="M303 61.5 H315.5 L310.5 67.5 V73 L308 72 V67.5 Z" fill="#ababab"/><path d="M310.5 68.5 L316.5 74.5 M316.5 68.5 L310.5 74.5" stroke="#aaa" stroke-width="1.2"/><path d="M303.5 81.5 H313 L309.2 86 V92 L307.3 91 V86 Z" fill="#b0b0b0"/><path d="M310.5 87.5 A3.2 3.2 0 0 1 316.5 88 M316.5 90.5 A3.2 3.2 0 0 1 310.5 90.5" fill="none" stroke="#aaa" stroke-width="1.2"/><path d="M303.5 101 H313 L309.5 105.5 V111 L307 110 V105.5 Z" fill="#555"/><path d="M310 111.7 L316.5 105.2" stroke="#2e75b6" stroke-width="2.6"/><path d="M308.2 113.8 L309 110.6 L311.2 112.8 Z" fill="#333"/><path d="M395 67.5 C395.5 62 405 61.5 406.5 68.5" fill="none" stroke="#2e75b6" stroke-width="1.6"/><path d="M403.5 67.5 L409.5 67.5 L406.5 71 Z" fill="#2e75b6"/><rect x="387.5" y="70.5" width="12" height="13" fill="#fff" stroke="#666"/><path d="M390 73.5 H397 M390 76 H397 M390 78.5 H397 M390 81 H397" stroke="#2e75b6"/><rect x="401.5" y="72.5" width="11" height="10" fill="#c9c9c9" stroke="#777"/><path d="M402 75.5 H412" stroke="#777"/><path d="M403 77.5 H406 M408 77.5 H411 M403 80.5 H406 M408 80.5 H411" stroke="#5b9bd5"/><rect x="425.5" y="62.5" width="12" height="11" fill="#fff" stroke="#666"/><path d="M426 66 H437 M426 69.5 H437" stroke="#aaa"/><rect x="427.5" y="65.5" width="6" height="3" fill="#fff" stroke="#4c9a6c"/><path d="M436 66 L433 71 L435 71 L432 75.5" fill="none" stroke="#f0b350" stroke-width="1.5"/><rect x="425.5" y="81.5" width="4" height="11" fill="#fff" stroke="#555"/><rect x="426" y="82" width="3" height="2.5" fill="#2e75b6"/><rect x="426" y="85" width="3" height="2.5" fill="#f0b350"/><rect x="426" y="88" width="3" height="2" fill="#2e75b6"/><rect x="426" y="90" width="3" height="2.5" fill="#f0b350"/><rect x="434.5" y="81.5" width="4" height="11" fill="#fff" stroke="#555"/><rect x="435" y="82" width="3" height="2.5" fill="#2e75b6"/><rect x="435" y="85" width="3" height="2.5" fill="#f0b350"/><circle cx="432" cy="87" r="1" fill="#2e75b6"/><rect x="425.5" y="104.5" width="8" height="3" fill="#fff" stroke="#777"/><rect x="425.5" y="109.5" width="8" height="3" fill="#fff" stroke="#777"/><path d="M432.5 105 L434.5 107 L438.8 101" fill="none" stroke="#4c9a6c" stroke-width="1.4"/><circle cx="435" cy="110.5" r="3" fill="#e0603e"/><path d="M433.5 109 L436.5 112" stroke="#fff" stroke-width="0.9"/><path d="M444 106.3 H448.5 L446.25 108.8 Z" fill="#555"/><rect x="455.5" y="62.5" width="3.5" height="10" fill="#fff" stroke="#555"/><path d="M455 66 H459 M455 69.5 H459" stroke="#555"/><path d="M459 67.5 H463" stroke="#2e75b6" stroke-width="1.2"/><rect x="464" y="65" width="5" height="5" rx="1" fill="#fff" stroke="#e0603e" stroke-width="1.2"/><circle cx="466.5" cy="67.5" r="0.6" fill="#555"/><rect x="455.5" y="85.5" width="4.5" height="4.5" fill="none" stroke="#bbb"/><rect x="463.5" y="81.5" width="4.5" height="4.5" fill="none" stroke="#bbb"/><rect x="463.5" y="89" width="4.5" height="4.5" fill="none" stroke="#bbb"/><path d="M460 87.5 L463.5 84 M460 88 L463.5 91" stroke="#bbb"/><rect x="491.5" y="63.5" width="22" height="22" fill="#fff" stroke="#999"/><path d="M491.5 68.2 H513 M491.5 72.4 H513 M491.5 76.7 H513 M491.5 81.2 H513 M496.2 64 V85 M500.4 64 V85 M504.7 64 V85 M509.2 64 V85" stroke="#a8a8a8" stroke-width="0.9"/><rect x="496.5" y="68.5" width="4" height="4" fill="#fff" stroke="#ed7d31"/><rect x="496.5" y="76.5" width="4" height="4" fill="#fff" stroke="#ed7d31"/><path d="M505.4 77.5 C505.2 71.8 514.8 71.2 514.8 76 C514.8 79.3 509.8 79.5 509.5 83.5" fill="none" stroke="#2e75b6" stroke-width="2.8"/><rect x="508.1" y="85" width="2.7" height="2.8" fill="#2e75b6"/><path d="M535.5 64 H558.5 V81 H535.5 Z" fill="#fff" stroke="#777"/><path d="M535.5 81 V84.5 H542 V81 M543.5 81 V84.5 H549.5 L551.5 82.5 V81" fill="#fff" stroke="#777"/><path d="M536 68.2 H558 M536 76.4 H558 M541.5 64.5 V80.5" stroke="#999" stroke-width="0.9"/><path d="M536 72.2 H558 M547.9 64.5 V80.5 M553.7 64.5 V80.5" stroke="#c8c8c8" stroke-width="0.9"/><path d="M536.2 80.2 L538.9 76.4 L541.5 78.8 L545.5 74.5" fill="none" stroke="#2e75b6" stroke-width="2"/><path d="M545 75 L546.5 72 L548.9 74.5 L554 69.3" fill="none" stroke="#e0603e" stroke-width="2"/><path d="M551 66.6 L557 65.8 L556 71.6 Z" fill="#e0603e"/><rect x="585.5" y="69.5" width="5" height="5" fill="#fff" stroke="#555"/><rect x="587.5" y="71.5" width="1.2" height="1.2" fill="#555"/><path d="M588 67 H590.5 M588 76.5 H590.5" stroke="#888"/><rect x="592.5" y="66.5" width="6" height="10" fill="#fff" stroke="#555"/><path d="M592.5 69.8 H598.5 M592.5 73.2 H598.5" stroke="#666" stroke-width="0.9"/><path d="M594 68.2 H597 M594 71.5 H597 M594 74.9 H597" stroke="#3b86c8" stroke-width="1.1"/><path d="M39.1 108.6 H43.1 L41.1 110.6 Z" fill="#666"/><path d="M100.3 109.6 H104.3 L102.3 111.6 Z" fill="#666"/><path d="M163.4 109.6 H167.4 L165.4 111.6 Z" fill="#666"/><path d="M519.6 109.9 H523.6 L521.6 111.9 Z" fill="#666"/><path d="M589.4 108.4 H593.4 L591.4 110.4 Z" fill="#666"/><path d="M652.5 129.5 L656.2 125.8 L660 129.5" fill="none" stroke="#555" stroke-width="1.5"/><path d="M80 152.3 H86.2 L83.1 155.4 Z" fill="#555"/><circle cx="104.5" cy="150.5" r="0.8" fill="#888"/><circle cx="104.5" cy="154.5" r="0.8" fill="#888"/><circle cx="104.5" cy="158.5" r="0.8" fill="#888"/><path d="M129 151 L137.5 159.5 M137.5 151 L129 159.5" stroke="#ababab" stroke-width="1.1"/><path d="M159 155.3 L162.5 159 L169.3 151.5" fill="none" stroke="#b0b0b0" stroke-width="1.5"/><text x="189.8" y="158.6" font-family="Liberation Serif" font-style="italic" font-size="11" fill="#444">f</text><text x="194" y="158.8" font-family="Liberation Serif" font-style="italic" font-size="9" fill="#444">x</text><path d="M654 152.5 L657 155.5 L660 152.5" fill="none" stroke="#444" stroke-width="1.6"/><path d="M20 178 V187.5 H10 Z" fill="#b8b8b8"/><rect x="95.5" y="226.5" width="13" height="13" fill="#fff" stroke="#c8c8c8"/><path d="M99 232.3 H105 L102 235.3 Z" fill="#555"/><rect x="167.5" y="226.5" width="13" height="13" fill="#fff" stroke="#c8c8c8"/><path d="M171 232.3 H177 L174 235.3 Z" fill="#555"/><rect x="230.5" y="226.5" width="13" height="13" fill="#fff" stroke="#c8c8c8"/><path d="M234 232.3 H240 L237 235.3 Z" fill="#555"/><rect x="300.5" y="226.5" width="13" height="13" fill="#fff" stroke="#c8c8c8"/><path d="M303 233.8 H307.6 L305.3 236.4 Z" fill="#555"/><path d="M309.8 229 V236.5 M308 234.8 L309.8 236.8 L311.6 234.8" fill="none" stroke="#555" stroke-width="1"/><rect x="367.5" y="226.5" width="13" height="13" fill="#fff" stroke="#c8c8c8"/><path d="M371 232.3 H377 L374 235.3 Z" fill="#555"/><rect x="444.5" y="226.5" width="13" height="13" fill="#fff" stroke="#c8c8c8"/><path d="M448 232.3 H454 L451 235.3 Z" fill="#555"/><path d="M458 510 V513 H455 Z" fill="#2e5c9a"/><rect x="653.5" y="176.5" width="12" height="12" fill="#fff" stroke="#c6c6c6"/><path d="M656.3 183.4 H662.3 L659.3 180.2 Z" fill="#666"/><rect x="653.5" y="188.5" width="12" height="290" fill="#fff" stroke="#c6c6c6"/><rect x="654" y="479" width="11" height="33" fill="#cdcdcd"/><rect x="653.5" y="511.5" width="12" height="12" fill="#fff" stroke="#c6c6c6"/><path d="M656.3 515.8 H662.3 L659.3 519 Z" fill="#666"/><circle cx="401.7" cy="531.6" r="0.7" fill="#999"/><circle cx="401.7" cy="535.1" r="0.7" fill="#999"/><circle cx="401.7" cy="538.6" r="0.7" fill="#999"/><rect x="415.5" y="530.5" width="12" height="12" fill="#fff" stroke="#c6c6c6"/><path d="M423 533 V539.5 L419.5 536.25 Z" fill="#555"/><rect x="427.5" y="530.5" width="189" height="12" fill="#fff" stroke="#c6c6c6"/><rect x="617" y="531" width="21" height="11" fill="#cdcdcd"/><rect x="637.5" y="530.5" width="12" height="12" fill="#fff" stroke="#c6c6c6"/><path d="M642 533 V539.5 L645.5 536.25 Z" fill="#555"/><path d="M27 532.5 V538.2 L24 535.35 Z" fill="#b0b0b0"/><path d="M48 532.5 V538.2 L51 535.35 Z" fill="#b0b0b0"/><circle cx="195.2" cy="535.7" r="6.2" fill="none" stroke="#777" stroke-width="1.2"/><path d="M191.5 535.7 H199 M195.2 532 V539.5" stroke="#777" stroke-width="1.3"/><circle cx="65" cy="553.6" r="2.3" fill="#666"/><rect x="62.5" y="555.5" width="11" height="6" fill="#fff" stroke="#666"/><rect x="68" y="551.5" width="5.5" height="2" fill="#666"/><path d="M65 557.7 h1 M67.5 557.7 h1 M70 557.7 h1 M65 559.7 h1 M67.5 559.7 h1 M70 559.7 h1" stroke="#777"/><rect x="411" y="547" width="32" height="19" fill="#c8c8c8"/><rect x="421.5" y="551.5" width="10" height="10" fill="none" stroke="#555"/><path d="M421.5 554.8 H431.5 M421.5 558.2 H431.5 M424.8 551.5 V561.5 M428.2 551.5 V561.5" stroke="#555"/><rect x="453.5" y="551.5" width="11" height="10" fill="none" stroke="#555"/><rect x="456.5" y="553.5" width="5" height="6" fill="none" stroke="#555"/><path d="M458 555.5 H460 M458 557.5 H460" stroke="#555"/><path d="M485.5 561.5 V551.5 H496.5 V561.5 Z M489.5 551.5 V556.5 H485.5 M492.5 551.5 V556.5 M485.5 556.5 H496.5" fill="none" stroke="#555"/><rect x="512" y="555.5" width="4.5" height="1.4" fill="#444"/><rect x="520.5" y="555.6" width="84" height="1" fill="#999"/><rect x="561.5" y="551.7" width="3.6" height="9" fill="#555"/><path d="M609 556 H615.5 M612.25 552.7 V559.3" stroke="#444" stroke-width="1.6"/></svg>
</body></html>
